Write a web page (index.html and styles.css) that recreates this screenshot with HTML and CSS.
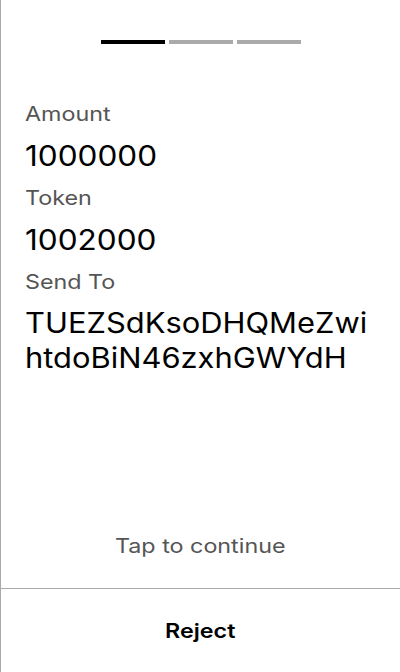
FILE: index.html
```html
<!DOCTYPE html>
<html>
<head>
<meta charset="utf-8">
<link rel="stylesheet" href="styles.css">
</head>
<body>
<div class="screen">
  <div class="main">
    <div class="progress">
      <span class="seg active"></span>
      <span class="seg"></span>
      <span class="seg"></span>
    </div>
    <div class="fields">
      <div class="label">Amount</div>
      <div class="value">1000000</div>
      <div class="label">Token</div>
      <div class="value">1002000</div>
      <div class="label">Send To</div>
      <div class="value addr">TUEZSdKsoDHQMeZwihtdoBiN46zxhGWYdH</div>
    </div>
    <div class="tap"><span class="wide">Tap to continue</span></div>
  </div>
  <div class="footer"><span class="wide">Reject</span></div>
</div>
</body>
</html>
```
FILE: styles.css
```css
html, body {
  margin: 0;
  padding: 0;
  background: #fff;
}
body {
  font-family: Inter, "Noto Sans", sans-serif;
  color: #000;
}
.screen {
  width: 400px;
  height: 672px;
  box-sizing: border-box;
  border-left: 1px solid #aaa;
  display: flex;
  flex-direction: column;
  overflow: hidden;
}
.main {
  flex: 1;
  display: flex;
  flex-direction: column;
}
.progress {
  display: flex;
  justify-content: center;
  gap: 4px;
  padding-top: 40px;
}
.seg {
  width: 64px;
  height: 4px;
  background: #aaa;
}
.seg.active {
  background: #000;
}
.fields {
  padding: 56px 24px 0 24px;
  flex: 1;
}
.label {
  width: fit-content;
  font-size: 20px;
  line-height: 28px;
  color: #555;
  margin-bottom: 10px;
  transform: scaleX(1.165);
  transform-origin: left center;
}
.value {
  width: fit-content;
  font-size: 28px;
  line-height: 36px;
  margin-bottom: 10px;
  color: #000;
  transform: scaleX(1.125);
  transform-origin: left center;
}
.addr {
  line-height: 35px;
  width: 316px;
  word-break: break-all;
  transform: scaleX(1.103);
}
.tap {
  text-align: center;
  font-size: 20px;
  line-height: 28px;
  color: #555;
  padding-bottom: 28px;
}
.wide {
  display: inline-block;
  transform: scaleX(1.165);
  transform-origin: center;
}
.footer {
  border-top: 1px solid #aaa;
  height: 83px;
  display: flex;
  align-items: center;
  justify-content: center;
  font-size: 20px;
  font-weight: 600;
}
```
